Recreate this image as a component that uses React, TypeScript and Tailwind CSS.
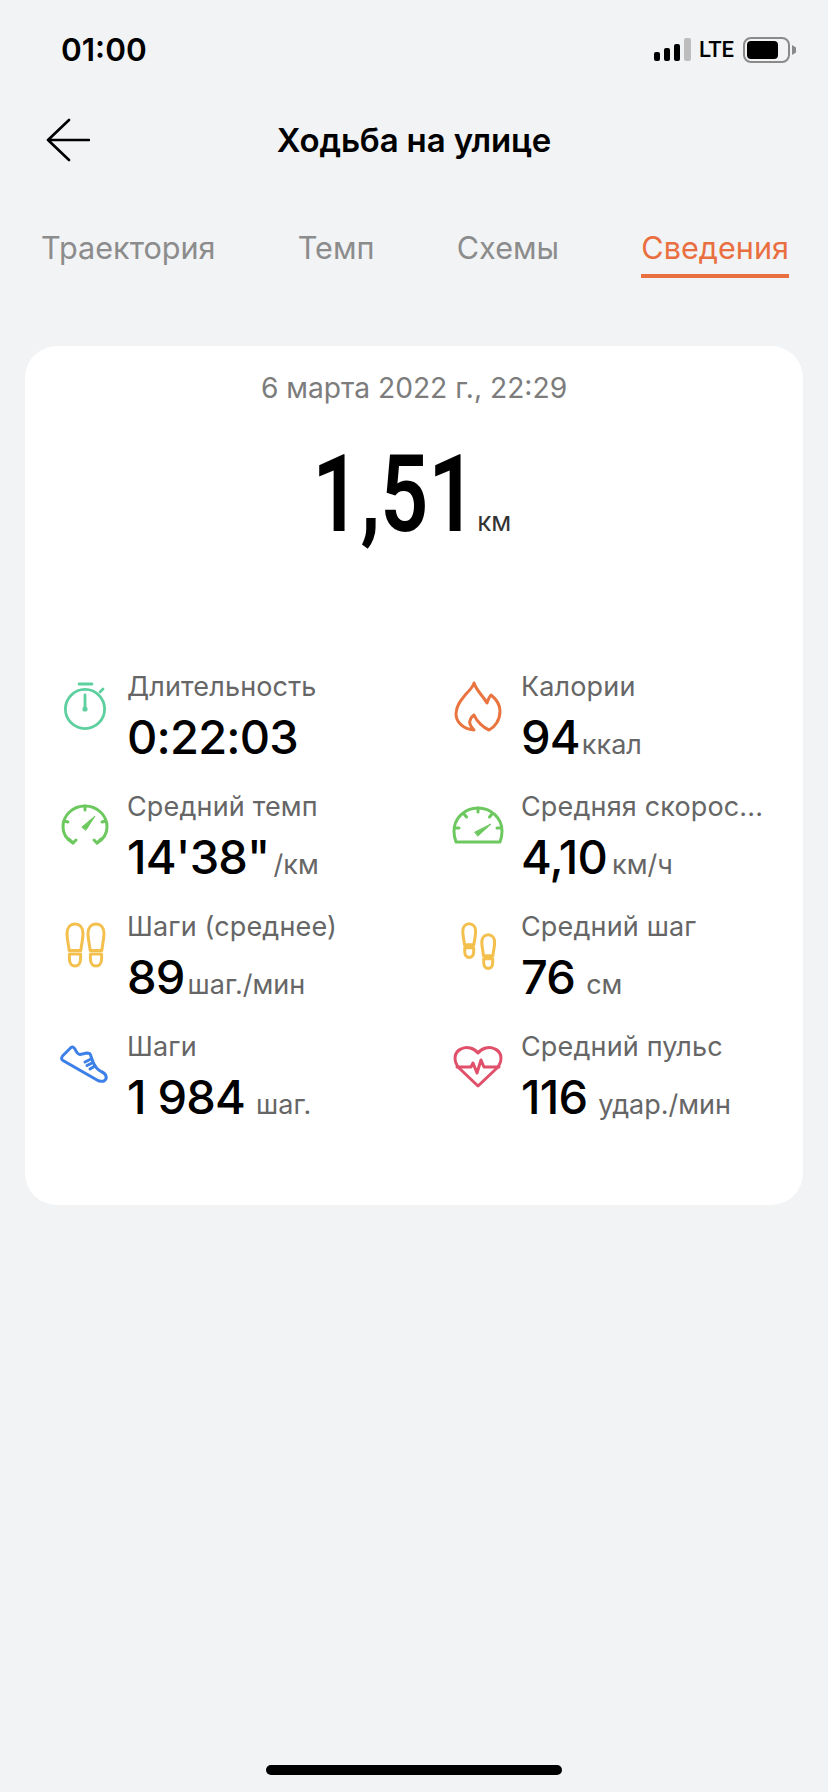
import React from "react";

const Sole = ({ x, y, s, c }: { x: number; y: number; s: number; c: string }) => (
  <g transform={`translate(${x} ${y}) scale(${s})`} fill="none" stroke={c} strokeWidth={3 / s} strokeLinejoin="round">
    <path d="M3.2 27.5C2.5 22 1 15 1 10.5C1 4.5 4.5 1 9 1C13.5 1 17 4.5 17 10.5C17 15 15.5 22 14.8 27.5Z" />
    <path d="M3.2 27.5H14.8M3.4 31H14.6V36C14.6 40.5 12 43 9 43C6 43 3.4 40.5 3.4 36Z" />
  </g>
);

const icons: Record<string, React.ReactNode> = {
  stopwatch: (
    <g fill="none" stroke="#5ecf9f" strokeWidth="2.8" strokeLinecap="round">
      <circle cx="29" cy="37" r="19.6" />
      <path d="M23 12H36M44 20L47 17M29 23V36" />
      <circle cx="29" cy="37" r="1.2" fill="#5ecf9f" />
    </g>
  ),
  pace: (
    <g fill="none" stroke="#6dc95f" strokeWidth="3" strokeLinecap="round" strokeLinejoin="round">
      <path d="M17 51C10 47 7 41 7 35C7 23 17 14 29 14C41 14 51 23 51 35C51 41 48 47 41 51" />
      <path d="M13 47L17 51L20 48M45 47L41 51L38 48M29 14V18M8 29L12 30M50 29L46 30" />
      <path d="M26 35L39 24L30 38Z" fill="#6dc95f" strokeWidth="1" />
    </g>
  ),
  steps: (
    <g>
      <Sole x={10} y={11} s={1} c="#f3bf4d" />
      <Sole x={31} y={11} s={1} c="#f3bf4d" />
    </g>
  ),
  shoe: (
    <g fill="none" stroke="#3d80e8" strokeWidth="3" strokeLinecap="round" strokeLinejoin="round">
      <path d="M15 15.5L6.5 24Q4.5 27 7 28.5L41 48Q44 50 48 49Q51 47 50 44Q49 41 45 39.5Q40 37 37 30L34.5 23Q34 21 31 21L24 22.5Q21 22 19 17Q17 14 15 15.5Z" />
      <path d="M29 30L35 27M31 33.5L37 30.5M34 37L39 34" />
    </g>
  ),
  flame: (
    <path
      d="M24 11C26 18 33 24 37 31C38 28 39 25 41 23C46 27 50 32 50 39C50 48 45 55 39 58C34 56 27 50 24 43C21 45 19 49 20 52C21 55 23 57 24 58C13 57 6 50 6 42C6 33 12 27 16 22C19 19 23 15 24 11Z"
      fill="none"
      stroke="#e9743f"
      strokeWidth="3"
      strokeLinejoin="round"
    />
  ),
  speed: (
    <g fill="none" stroke="#6dc95f" strokeWidth="3" strokeLinecap="round" strokeLinejoin="round">
      <path d="M6 50Q4 45 4 39C4 26 15 16 28 16C41 16 52 26 52 39Q52 45 50 50Z" />
      <path d="M28 16V20M14 22L16.5 25M42 22L39.5 25M5 36H9M51 36H47" />
      <path d="M25 40L41 32L28 44Z" fill="#6dc95f" strokeWidth="1" />
    </g>
  ),
  stride: (
    <g>
      <Sole x={12} y={11} s={0.8} c="#f3bf4d" />
      <Sole x={31} y={22} s={0.8} c="#f3bf4d" />
    </g>
  ),
  heart: (
    <g fill="none" stroke="#e0506a" strokeWidth="3" strokeLinejoin="round" strokeLinecap="round">
      <path d="M28 54L9 36C3 29 4 20 11 17C17 14 24 16 28 21C32 16 39 14 45 17C52 20 53 29 47 36Z" />
      <path d="M7 35H21L23 31L27 41L31 28L34 35H49" />
    </g>
  ),
};

type Item = { icon: string; label: string; value: string; unit: string; ml: string };

const items: Item[] = [
  { icon: "stopwatch", label: "Длительность", value: "0:22:03", unit: "", ml: "ml-0" },
  { icon: "flame", label: "Калории", value: "94", unit: "ккал", ml: "ml-[2px]" },
  { icon: "pace", label: "Средний темп", value: "14'38\"", unit: "/км", ml: "ml-[4px]" },
  { icon: "speed", label: "Средняя скорос...", value: "4,10", unit: "км/ч", ml: "ml-[5px]" },
  { icon: "steps", label: "Шаги (среднее)", value: "89", unit: "шаг./мин", ml: "ml-[3px]" },
  { icon: "stride", label: "Средний шаг", value: "76", unit: "см", ml: "ml-[11px]" },
  { icon: "shoe", label: "Шаги", value: "1 984", unit: "шаг.", ml: "ml-[11px]" },
  { icon: "heart", label: "Средний пульс", value: "116", unit: "удар./мин", ml: "ml-[11px]" },
];

export default function App() {
  return (
    <div className="flex h-[1792px] w-[828px] flex-col bg-[#f1f3f5] font-['Inter',sans-serif] text-black">
      <div className="flex h-[99px] items-center justify-between pl-[61px] pr-[31px]">
        <span className="text-[31.5px] font-semibold">01:00</span>
        <div className="flex items-center">
          <svg width="38" height="24" viewBox="0 0 38 24">
            <rect x="0" y="14" width="6" height="9" rx="2" fill="#000" />
            <rect x="10" y="10" width="6" height="13" rx="2" fill="#000" />
            <rect x="20" y="6" width="6" height="17" rx="2" fill="#000" />
            <rect x="30" y="0" width="7" height="23" rx="2" fill="#bdbdbd" />
          </svg>
          <span className="ml-[7px] mr-[9px] font-['Roboto',sans-serif] text-[22px] font-medium">LTE</span>
          <svg width="54" height="26" viewBox="0 0 54 26">
            <rect x="1" y="1" width="45" height="24" rx="7" fill="none" stroke="#8a8a8a" strokeWidth="2" />
            <rect x="4" y="4" width="31" height="18" rx="4" fill="#000" />
            <path d="M49 8L53 10.5V15.5L49 18Z" fill="#8a8a8a" />
          </svg>
        </div>
      </div>

      <div className="relative flex h-[83px] items-center justify-center">
        <svg className="absolute left-[46px] top-[19px]" width="44" height="44" viewBox="0 0 44 44" fill="none" stroke="#000" strokeWidth="2.6" strokeLinecap="round" strokeLinejoin="round">
          <path d="M23 2L2 22L23 42M2 22H43" />
        </svg>
        <span className="text-[33px] font-semibold tracking-[-0.15px]">Ходьба на улице</span>
      </div>

      <div className="mt-[46px] flex justify-between pl-[41px] pr-[39px]">
        {["Траектория", "Темп", "Схемы"].map((t) => (
          <span key={t} className="h-[40px] text-[30.6px] leading-[40px] text-[#8c8c8c]">{t}</span>
        ))}
        <div className="flex flex-col">
          <span className="h-[40px] text-[30.6px] leading-[40px] text-[#ea6f40]">Сведения</span>
          <div className="mt-[6px] h-[4px] bg-[#ea6f40]" />
        </div>
      </div>

      <div className="mx-[25px] mt-[68px] flex h-[859px] flex-col rounded-[32px] bg-white">
        <div className="mt-[24px] text-center text-[28.2px] leading-[36px] text-[#7c7c7c]">
          6 марта 2022 г., 22:29
        </div>
        <div className="flex h-[266px] items-start justify-center pr-[51px] pt-[28px]">
          <div className="flex items-baseline">
            <span className="inline-block origin-right scale-x-[0.78] font-['Roboto',sans-serif] text-[108px] font-semibold leading-[120px]">1,51</span>
            <span className="ml-[1px] text-[26px] text-[#333]">км</span>
          </div>
        </div>
        <div className="grid grid-cols-[394px_1fr] pl-[31px]">
          {items.map((it) => (
            <div key={it.icon} className="flex h-[120px]">
              <svg className="mr-[15px] shrink-0" width="56" height="64" viewBox="0 0 56 64">
                {icons[it.icon]}
              </svg>
              <div className="flex flex-col">
                <span className="h-[30px] text-[27px] leading-[30px] tracking-[0.15px] text-[#666]">{it.label}</span>
                <div className="mt-[8px] flex h-[54px] items-baseline whitespace-nowrap">
                  <span className="text-[47px] font-medium leading-[54px] tracking-[-0.8px]">{it.value}</span>
                  {it.unit && <span className={`${it.ml} text-[27px] text-[#666]`}>{it.unit}</span>}
                </div>
              </div>
            </div>
          ))}
        </div>
      </div>

      <div className="mb-[17px] mt-auto flex justify-center">
        <div className="h-[10px] w-[296px] rounded-full bg-black" />
      </div>
    </div>
  );
}
